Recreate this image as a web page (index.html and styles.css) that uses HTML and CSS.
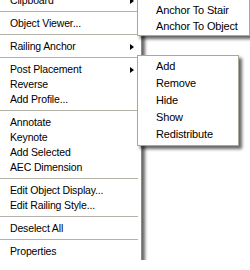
FILE: index.html
```html
<!DOCTYPE html>
<html lang="en">
<head>
    <meta charset="UTF-8">
    <meta name="viewport" content="width=device-width, initial-scale=1.0">
    <title>Railing Context Menu</title>
    <link rel="stylesheet" href="styles.css">
</head>
<body>
    <div class="screen">
        <div class="menu main-menu">
            <div class="item has-sub">Clipboard <span class="arrow"></span></div>
            <div class="sep"></div>
            <div class="item">Object Viewer...</div>
            <div class="sep"></div>
            <div class="item has-sub">Railing Anchor <span class="arrow"></span></div>
            <div class="sep"></div>
            <div class="item has-sub">Post Placement <span class="arrow"></span></div>
            <div class="item">Reverse</div>
            <div class="item">Add Profile...</div>
            <div class="sep"></div>
            <div class="item">Annotate</div>
            <div class="item">Keynote</div>
            <div class="item">Add Selected</div>
            <div class="item">AEC Dimension</div>
            <div class="sep"></div>
            <div class="item">Edit Object Display...</div>
            <div class="item">Edit Railing Style...</div>
            <div class="sep"></div>
            <div class="item">Deselect All</div>
            <div class="sep"></div>
            <div class="item">Properties</div>
        </div>

        <!-- flyouts open over the main menu -->
        <div class="menu flyout anchor-menu">
            <div class="item">Anchor To Stair</div>
            <div class="item">Anchor To Object</div>
        </div>

        <div class="menu flyout post-menu">
            <div class="item">Add</div>
            <div class="item">Remove</div>
            <div class="item">Hide</div>
            <div class="item">Show</div>
            <div class="item">Redistribute</div>
        </div>
    </div>
</body>
</html>
```

FILE: styles.css
```css
html, body {
    margin: 0;
    padding: 0;
    background-color: #fff;
    overflow: hidden;
}
.screen {
    position: relative;
    width: 250px;
    height: 270px;
    font-family: "Liberation Sans", Arial, sans-serif;
    font-size: 10.5px;
    letter-spacing: -0.15px;
    color: #000;
}
.menu {
    box-sizing: border-box;
    background-color: #fff;
    border: 1px solid #aca899;
    box-shadow: 3px 3px 3px rgba(0, 0, 0, 0.6);
}
.main-menu {
    width: 146px;
    margin-top: -10px;
    margin-left: -4px;
    padding: 2px 2px 3px 2px;
    border-color: #8d8a80;
}
.item {
    display: flex;
    align-items: center;
    justify-content: space-between;
    height: 15px;
    line-height: 15px;
    padding-left: 11px;
    white-space: nowrap;
}
.arrow {
    width: 0;
    height: 0;
    margin-right: 5px;
    border-top: 3px solid transparent;
    border-bottom: 3px solid transparent;
    border-left: 4px solid #000;
}
.sep {
    height: 1px;
    margin: 3px 1px 4px 0;
    background-color: #b4b1a6;
}
.flyout {
    position: absolute;
    left: 137px;
}
.flyout .item {
    padding-left: 16px;
    font-size: 11px;
}
.anchor-menu {
    top: 9px;
    width: 113px;
    padding: 2px 2px 1px 2px;
}
.anchor-menu .item {
    height: 16px;
    line-height: 16px;
}
.post-menu {
    top: 65px;
    width: 102px;
    padding: 2px;
}
.post-menu .item {
    height: 17px;
    line-height: 17px;
}
```
